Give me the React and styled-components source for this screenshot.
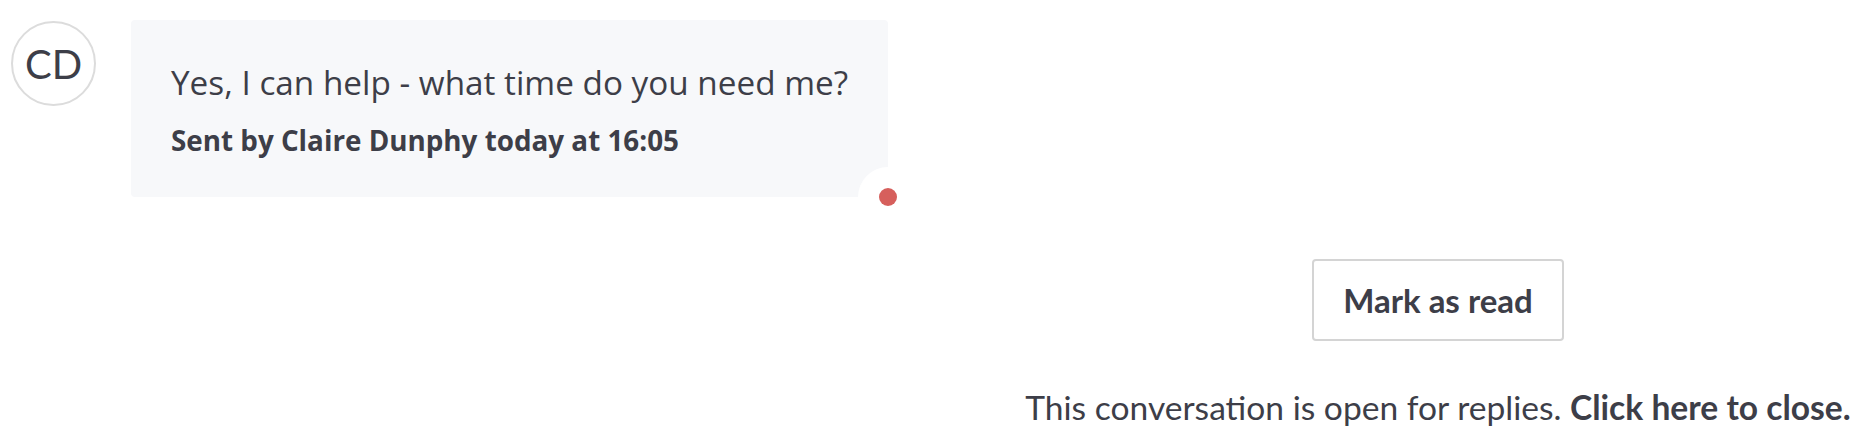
import React from "react";
import styled, { createGlobalStyle } from "styled-components";

const GlobalStyle = createGlobalStyle`
    html, body {
        margin: 0;
        padding: 0;
        background: #fff;
    }
    body {
        font-family: "Open Sans", "Liberation Sans", sans-serif;
        color: #3d3e48;
    }
`;

const App = () => {
    return (
        <>
            <GlobalStyle />
            <Page>
                <MessageRow>
                    <Avatar>CD</Avatar>
                    <Bubble>
                        <MessageText>
                            Yes, I can help - what time do you need me?
                        </MessageText>
                        <Meta>Sent by Claire Dunphy today at 16:05</Meta>
                        <UnreadBadge>
                            <Dot />
                        </UnreadBadge>
                    </Bubble>
                </MessageRow>
                <Actions>
                    <Button type="button">Mark as read</Button>
                    <Notice>
                        This conversation is open for replies.{" "}
                        <strong>Click here to close.</strong>
                    </Notice>
                </Actions>
            </Page>
        </>
    );
};

export default App;

const Page = styled.div`
    width: 1872px;
    height: 446px;
    box-sizing: border-box;
    padding: 20px 0 0 11px;
    display: flex;
    flex-direction: column;
    overflow: hidden;
`;

const MessageRow = styled.div`
    display: flex;
    align-items: flex-start;
    gap: 35px;
`;

const Avatar = styled.div`
    width: 85px;
    height: 85px;
    margin-top: 1px;
    box-sizing: border-box;
    border: 2px solid #dcdcdc;
    border-radius: 50%;
    display: flex;
    align-items: center;
    justify-content: center;
    font-family: Lato, "Liberation Sans", sans-serif;
    font-size: 40px;
    font-weight: 400;
    color: #3d3e48;
    flex-shrink: 0;
`;

const Bubble = styled.div`
    position: relative;
    background: #f7f8fa;
    border-radius: 4px;
    padding: 40px 40px 38px;
    display: flex;
    flex-direction: column;
    gap: 16px;
`;

const MessageText = styled.p`
    margin: 0;
    font-size: 33.3px;
    line-height: 45px;
    font-weight: 400;
    white-space: nowrap;
`;

const Meta = styled.p`
    margin: 0;
    font-size: 27.8px;
    line-height: 38px;
    font-weight: 700;
    white-space: nowrap;
`;

const UnreadBadge = styled.span`
    position: absolute;
    right: -30px;
    bottom: -30px;
    width: 60px;
    height: 60px;
    border-radius: 50%;
    background: #fff;
    display: flex;
    align-items: center;
    justify-content: center;
`;

const Dot = styled.span`
    width: 18px;
    height: 18px;
    border-radius: 50%;
    background: #d65f5c;
`;

const Actions = styled.div`
    align-self: flex-end;
    width: 868px;
    margin-top: 62px;
    display: flex;
    flex-direction: column;
    align-items: center;
    gap: 46px;
    font-family: Lato, "Liberation Sans", sans-serif;
`;

const Button = styled.button`
    width: 252px;
    height: 82px;
    box-sizing: border-box;
    border: 2px solid #d4d4d4;
    border-radius: 4px;
    background: #fff;
    font-family: inherit;
    font-size: 33px;
    font-weight: 700;
    color: #3d3e48;
    cursor: pointer;
`;

const Notice = styled.p`
    margin: 0;
    font-size: 33.6px;
    line-height: 41px;
    color: #3d3e48;
    white-space: nowrap;

    strong {
        font-weight: 700;
    }
`;
